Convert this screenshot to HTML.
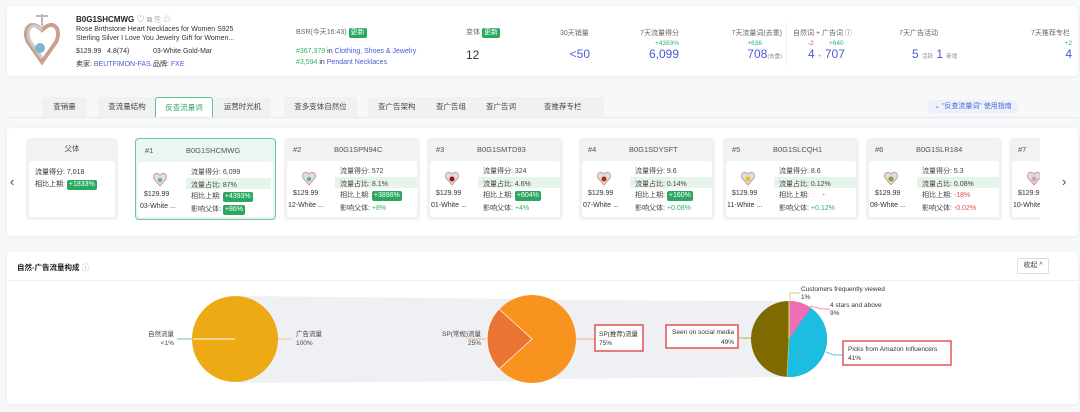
<!DOCTYPE html>
<html><head><meta charset="utf-8"><style>
*{margin:0;padding:0;box-sizing:border-box}
body{width:1080px;height:412px;background:#f7f8fa;font-family:"Liberation Sans","Noto Sans CJK SC",sans-serif;color:#333;position:relative;overflow:hidden;font-size:7px}
.a{position:absolute;white-space:nowrap}
.card{position:absolute;background:#fff;border-radius:4px;box-shadow:0 1px 4px rgba(0,0,0,.06)}
.blue{color:#4a5bd4}.gr{color:#2fb36b}.red{color:#e0504a}
.tag{display:inline-block;background:#2aa85f;color:#fff;padding:0 2px;border-radius:2px;font-size:7px;line-height:10px}
.r{text-align:right}
.lbl{color:#666;font-size:7px}
.big{font-size:12px;color:#4a5bd4}
.tab{position:absolute;top:97px;height:20px;background:#f0f1f3;font-size:7.5px;color:#444;text-align:center;line-height:20px;border-radius:3px 3px 0 0}
.sc{position:absolute;top:138px;width:136px;height:82px;background:#f1f2f4;border-radius:4px}
.sc .hd{height:22px;font-size:7.5px;color:#555;position:relative}
.sc .bd{position:absolute;left:3px;right:3px;top:23px;bottom:3px;background:#fff;border-radius:3px}
.sc .st{position:absolute;left:53px;font-size:7px;color:#444}
.pend{position:absolute;left:14px;top:8px;width:16px;height:18px}
</style></head><body>
<div class="card" style="left:7px;top:6px;width:1071px;height:70px"></div>
<svg class="a" style="left:20px;top:12px" width="44" height="58" viewBox="0 0 44 58"><path d="M22 18 C10 6 2 18 8 30 L22 50 L36 30 C42 18 34 6 22 18Z" fill="none" stroke="#c9a090" stroke-width="4"/><path d="M22 18 C12 8 5 18 10 29 L22 46" fill="none" stroke="#ccc" stroke-width="3"/><circle cx="20" cy="36" r="5" fill="#7ab8d0"/><path d="M22 2 L22 14 M16 4 L28 4" stroke="#bbb" stroke-width="2"/></svg>
<div class="a" style="left:76px;top:14px;font-size:8px;font-weight:bold;color:#222">B0G1SHCMWG <span style="font-weight:normal;color:#999">♡ ⧉ ⎘ ♲</span></div>
<div class="a" style="left:76px;top:26px;font-size:7px;line-height:8.5px">Rose Birthstone Heart Necklaces for Women S925<br>Sterling Silver I Love You Jewelry Gift for Women...</div>
<div class="a" style="left:76px;top:48px">$129.99 &nbsp;&nbsp;4.8(74)</div>
<div class="a" style="left:153px;top:48px">03-White Gold-Mar</div>
<div class="a" style="left:76px;top:59px">卖家: <span class="blue">BEUTFIMON-FAS...</span></div>
<div class="a" style="left:153px;top:59px">品牌: <span class="blue">FXE</span></div>
<div class="a lbl" style="left:296px;top:27px">BSR(今天16:43) <span class="tag">更新</span></div>
<div class="a" style="left:296px;top:48px"><span class="gr">#367,379</span> in <span class="blue">Clothing, Shoes &amp; Jewelry</span></div>
<div class="a" style="left:296px;top:59px"><span class="gr">#3,594</span> in <span class="blue">Pendant Necklaces</span></div>
<div class="a lbl" style="left:466px;top:27px">变体 <span class="tag">更新</span></div>
<div class="a" style="left:466px;top:48px;font-size:12px;color:#333">12</div>
<div class="a lbl" style="left:560px;top:28px">30天销量</div>
<div class="a big" style="right:490px;top:47px">&lt;50</div>
<div class="a lbl" style="right:401px;top:28px">7天流量得分</div>
<div class="a gr" style="right:401px;top:40px;font-size:6.5px">+4393%</div>
<div class="a big" style="right:401px;top:47px">6,099</div>
<div class="a lbl" style="right:298px;top:28px">7天流量词(去重)</div>
<div class="a gr" style="right:318px;top:40px;font-size:6.5px">+636</div>
<div class="a big" style="right:298px;top:47px">708<span style="font-size:5.5px;color:#888">(去重)</span></div>
<div class="a" style="left:786px;top:22px;width:1px;height:44px;background:#eee"></div>
<div class="a lbl" style="left:793px;top:28px">自然词 + 广告词 ⓘ</div>
<div class="a red" style="left:808px;top:40px;font-size:6.5px">-2</div>
<div class="a gr" style="left:829px;top:40px;font-size:6.5px">+640</div>
<div class="a big" style="left:808px;top:47px">4 <span style="font-size:6px;color:#999">+</span> 707</div>
<div class="a lbl" style="right:142px;top:28px">7天广告活动</div>
<div class="a big" style="left:912px;top:47px">5 <span style="font-size:5.5px;color:#888">活跃</span> 1 <span style="font-size:5.5px;color:#888">新增</span></div>
<div class="a lbl" style="left:1031px;top:28px">7天推荐专栏</div>
<div class="a gr" style="right:8px;top:40px;font-size:6.5px">+2</div>
<div class="a big" style="right:8px;top:47px">4</div>

<div class="a" style="left:8px;top:117px;width:1070px;height:1px;background:#e6e8eb"></div>
<div class="tab" style="left:42px;width:45px">查销量</div>
<div class="tab" style="left:98px;width:58px">查流量结构</div>
<div class="tab" style="left:155px;width:58px;background:#fff;border:1px solid #5cc28a;border-bottom:none;color:#2aa85f">反查流量词</div>
<div class="tab" style="left:214px;width:57px">运营时光机</div>
<div class="tab" style="left:284px;width:73px">查多变体自然位</div>
<div class="tab" style="left:368px;width:236px;text-align:left"><span style="position:absolute;left:10px">查广告架构</span><span style="position:absolute;left:68px">查广告组</span><span style="position:absolute;left:118px">查广告词</span><span style="position:absolute;left:176px">查推荐专栏</span></div>
<div class="a" style="left:927px;top:100px;width:92px;height:13px;background:#eef1fa;border-radius:7px;color:#4a6bd8;font-size:7px;line-height:13px;text-align:center">⌄ “反查流量词” 使用指南</div>

<div class="card" style="left:7px;top:128px;width:1071px;height:108px"></div>
<div class="a" style="left:10px;top:174px;font-size:13px;color:#444">‹</div>
<div class="a" style="left:1062px;top:174px;font-size:13px;color:#444">›</div>
<div class="sc" style="left:26px;width:92px"><div class="hd" style="text-align:center;line-height:22px">父体</div><div class="bd"><div class="a" style="left:6px;top:6px;font-size:7px">流量得分: 7,018</div><div class="a" style="left:6px;top:18px;font-size:7px">相比上期: <span class="tag">+1833%</span></div></div></div>

<div class="sc" style="left:135px;width:141px;border:1px solid #6cc796;background:#eaf6ef">
<div class="hd"><span class="a" style="left:9px;top:7px">#1</span><span class="a" style="left:50px;top:7px">B0G1SHCMWG</span></div>
<div class="bd" style="left:2px;right:2px;bottom:2px">
<svg class="pend" viewBox="0 0 16 18"><path d="M8 5C4 1 0 5 2 9L8 16 14 9C16 5 12 1 8 5Z" fill="#ddd" stroke="#c9a090"/><circle cx="8" cy="10" r="2" fill="#5ab"/></svg>
<div class="a" style="left:6px;top:29px;font-size:7px">$129.99</div><div class="a" style="left:2px;top:41px;font-size:7px">03-White ...</div>
<div class="st" style="top:5px">流量得分: 6,099</div>
<div class="st" style="top:16px;left:48px;width:85px;height:11px;background:#e6f4ea;padding:2px 0 0 5px">流量占比: 87%</div>
<div class="st" style="top:29px">相比上期: <span class="tag">+4393%</span></div>
<div class="st" style="top:42px">影响父体: <span class="tag">+86%</span></div>
</div></div>

<div class="sc" style="left:284px"><div class="hd"><span class="a" style="left:9px;top:7px">#2</span><span class="a" style="left:50px;top:7px">B0G1SPN94C</span></div><div class="bd">
<svg class="pend" viewBox="0 0 16 18"><path d="M8 5C4 1 0 5 2 9L8 16 14 9C16 5 12 1 8 5Z" fill="#ddd" stroke="#c9a090"/><circle cx="8" cy="10" r="2" fill="#5ab"/></svg>
<div class="a" style="left:6px;top:29px;font-size:7px">$129.99</div><div class="a" style="left:1px;top:41px;font-size:7px">12-White ...</div>
<div class="st" style="top:5px">流量得分: 572</div><div class="st" style="top:16px;left:48px;width:82px;height:11px;background:#e6f4ea;padding:2px 0 0 5px">流量占比: 8.1%</div>
<div class="st" style="top:29px">相比上期: <span class="tag">+3896%</span></div><div class="st" style="top:42px">影响父体: <span class="gr">+8%</span></div></div></div>

<div class="sc" style="left:427px"><div class="hd"><span class="a" style="left:9px;top:7px">#3</span><span class="a" style="left:50px;top:7px">B0G1SMTD93</span></div><div class="bd">
<svg class="pend" viewBox="0 0 16 18"><path d="M8 5C4 1 0 5 2 9L8 16 14 9C16 5 12 1 8 5Z" fill="#ddd" stroke="#c9a090"/><circle cx="8" cy="10" r="2.5" fill="#a01020"/></svg>
<div class="a" style="left:6px;top:29px;font-size:7px">$129.99</div><div class="a" style="left:1px;top:41px;font-size:7px">01-White ...</div>
<div class="st" style="top:5px">流量得分: 324</div><div class="st" style="top:16px;left:48px;width:82px;height:11px;background:#e6f4ea;padding:2px 0 0 5px">流量占比: 4.6%</div>
<div class="st" style="top:29px">相比上期: <span class="tag">+604%</span></div><div class="st" style="top:42px">影响父体: <span class="gr">+4%</span></div></div></div>

<div class="sc" style="left:579px"><div class="hd"><span class="a" style="left:9px;top:7px">#4</span><span class="a" style="left:50px;top:7px">B0G1SDYSFT</span></div><div class="bd">
<svg class="pend" viewBox="0 0 16 18"><path d="M8 5C4 1 0 5 2 9L8 16 14 9C16 5 12 1 8 5Z" fill="#ddd" stroke="#c9a090"/><circle cx="8" cy="10" r="2.5" fill="#b03010"/></svg>
<div class="a" style="left:6px;top:29px;font-size:7px">$129.99</div><div class="a" style="left:1px;top:41px;font-size:7px">07-White ...</div>
<div class="st" style="top:5px">流量得分: 9.6</div><div class="st" style="top:16px;left:48px;width:82px;height:11px;background:#e6f4ea;padding:2px 0 0 5px">流量占比: 0.14%</div>
<div class="st" style="top:29px">相比上期: <span class="tag">+160%</span></div><div class="st" style="top:42px">影响父体: <span class="gr">+0.08%</span></div></div></div>

<div class="sc" style="left:723px"><div class="hd"><span class="a" style="left:9px;top:7px">#5</span><span class="a" style="left:50px;top:7px">B0G1SLCQH1</span></div><div class="bd">
<svg class="pend" viewBox="0 0 16 18"><path d="M8 5C4 1 0 5 2 9L8 16 14 9C16 5 12 1 8 5Z" fill="#ddd" stroke="#c9a090"/><circle cx="8" cy="10" r="2.5" fill="#e8c020"/></svg>
<div class="a" style="left:6px;top:29px;font-size:7px">$129.99</div><div class="a" style="left:1px;top:41px;font-size:7px">11-White ...</div>
<div class="st" style="top:5px">流量得分: 8.6</div><div class="st" style="top:16px;left:48px;width:82px;height:11px;background:#e6f4ea;padding:2px 0 0 5px">流量占比: 0.12%</div>
<div class="st" style="top:29px">相比上期: &nbsp;&nbsp;&nbsp;&nbsp;&nbsp;&nbsp;-</div><div class="st" style="top:42px">影响父体: <span class="gr">+0.12%</span></div></div></div>

<div class="sc" style="left:866px"><div class="hd"><span class="a" style="left:9px;top:7px">#6</span><span class="a" style="left:50px;top:7px">B0G1SLR184</span></div><div class="bd">
<svg class="pend" viewBox="0 0 16 18"><path d="M8 5C4 1 0 5 2 9L8 16 14 9C16 5 12 1 8 5Z" fill="#ddd" stroke="#c9a090"/><circle cx="8" cy="10" r="2.5" fill="#8aa040"/></svg>
<div class="a" style="left:6px;top:29px;font-size:7px">$129.99</div><div class="a" style="left:1px;top:41px;font-size:7px">08-White ...</div>
<div class="st" style="top:5px">流量得分: 5.3</div><div class="st" style="top:16px;left:48px;width:82px;height:11px;background:#e6f4ea;padding:2px 0 0 5px">流量占比: 0.08%</div>
<div class="st" style="top:29px">相比上期: <span class="red">-18%</span></div><div class="st" style="top:42px">影响父体: <span class="red">-0.02%</span></div></div></div>

<div class="sc" style="left:1009px;width:31px;overflow:hidden;border-radius:4px 0 0 4px"><div class="hd"><span class="a" style="left:9px;top:7px">#7</span></div><div class="bd" style="right:0">
<svg class="pend" viewBox="0 0 16 18"><path d="M8 5C4 1 0 5 2 9L8 16 14 9C16 5 12 1 8 5Z" fill="#ddd" stroke="#c9a090"/><circle cx="8" cy="10" r="2.5" fill="#d8a0c0"/></svg>
<div class="a" style="left:6px;top:29px;font-size:7px">$129.9</div><div class="a" style="left:1px;top:41px;font-size:7px">10-White</div></div></div>

<div class="card" style="left:7px;top:252px;width:1071px;height:152px"></div>
<div class="a" style="left:17px;top:262px;font-size:7.5px;font-weight:bold;color:#222">自然-广告流量构成 <span style="font-weight:normal;color:#aaa">ⓘ</span></div>
<div class="a" style="left:8px;top:280px;width:1070px;height:1px;background:#eee"></div>
<div class="a" style="left:1017px;top:258px;width:32px;height:16px;border:1px solid #ddd;border-radius:2px;font-size:7px;line-height:14px;text-align:center;color:#444">收起 ^</div>
<svg class="a" style="left:0;top:280px" width="1080" height="130" viewBox="0 280 1080 130" font-family="Liberation Sans, Noto Sans CJK SC, sans-serif" font-size="6.5">
<polygon points="240,296 525,299 525,381 240,383" fill="#eef0f3"/>
<polygon points="535,300 790,301 790,377 535,379" fill="#eef0f3"/>
<line x1="177" y1="339" x2="235" y2="339" stroke="#5cc6a8" stroke-width="1"/>
<circle cx="235" cy="339" r="43" fill="#eeaa14"/>
<line x1="193" y1="339" x2="235" y2="339" stroke="#fff" stroke-width="1"/>
<line x1="278" y1="339" x2="292" y2="339" stroke="#f5c98a"/>
<text x="174" y="336" text-anchor="end" fill="#444">自然流量</text><text x="174" y="345" text-anchor="end" fill="#444">&lt;1%</text>
<text x="296" y="336" fill="#444">广告流量</text><text x="296" y="345" fill="#444">100%</text>
<line x1="468" y1="339" x2="486" y2="339" stroke="#f0a080"/>
<text x="481" y="336" text-anchor="end" fill="#444">SP(常规)流量</text><text x="481" y="345" text-anchor="end" fill="#444">25%</text>
<circle cx="532" cy="339" r="44" fill="#f7931e"/>
<path d="M532 339 L499 309 A44 44 0 0 0 499 369 Z" fill="#ea7432" stroke="#fff" stroke-width=".7"/>
<line x1="576" y1="339" x2="595" y2="339" stroke="#f5b070"/>
<rect x="595" y="325" width="48" height="26" fill="#fff" stroke="#e03a3a" stroke-width="1.3"/>
<text x="599" y="336" fill="#333">SP(推荐)流量</text><text x="599" y="345" fill="#333">75%</text>
<rect x="666" y="325" width="72" height="23" fill="#fff" stroke="#e03a3a" stroke-width="1.3"/>
<text x="672" y="334" fill="#333">Seen on social media</text><text x="734" y="344" text-anchor="end" fill="#333">49%</text>
<line x1="738" y1="338" x2="752" y2="338" stroke="#a0b060"/>
<circle cx="789" cy="339" r="38" fill="#7e6a00"/>
<path d="M789 339 L789 301 A38 38 0 0 1 811 308 Z" fill="#ee6fb8"/>
<path d="M789 339 L811 308 A38 38 0 0 1 787 377 Z" fill="#1bbde0"/>
<line x1="789" y1="339" x2="789" y2="301" stroke="#c8d860" stroke-width="1.2"/>
<line x1="789" y1="339" x2="787" y2="377" stroke="#c8d860" stroke-width=".7"/>
<polyline points="790,301 790,293 800,293" fill="none" stroke="#b0d040" stroke-width=".7"/>
<text x="801" y="291" fill="#333">Customers frequently viewed</text><text x="801" y="299" fill="#333">1%</text>
<polyline points="810,306 822,309 830,309" fill="none" stroke="#ee6fb8" stroke-width=".7"/>
<text x="830" y="307" fill="#333">4 stars and above</text><text x="830" y="315" fill="#333">9%</text>
<polyline points="826,352 834,355 844,355" fill="none" stroke="#1bbde0" stroke-width=".7"/>
<rect x="843" y="341" width="108" height="24" fill="#fff" stroke="#e03a3a" stroke-width="1.3"/>
<text x="848" y="351" fill="#333">Picks from Amazon Influencers</text><text x="848" y="360" fill="#333">41%</text>
</svg>
</body></html>
